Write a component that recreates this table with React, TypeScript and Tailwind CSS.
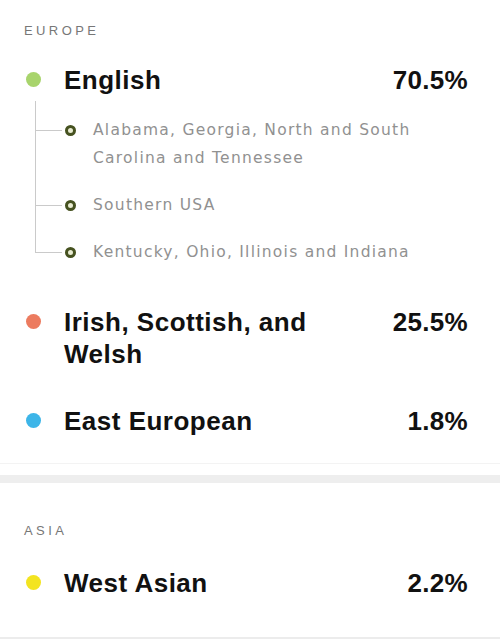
import React from "react";

type Sub = string;

function Row({
  color,
  name,
  pct,
  className = "",
}: {
  color: string;
  name: string;
  pct: string;
  className?: string;
}) {
  return (
    <div className={"flex items-start " + className}>
      <div className="w-[40px] shrink-0">
        <div
          className="ml-[2px] mt-[8px] h-[15px] w-[15px] rounded-full"
          style={{ backgroundColor: color }}
        />
      </div>
      <div className="w-[290px] text-[26px] font-bold leading-[32px] tracking-[0.5px] text-[#111]">
        {name}
      </div>
      <div className="ml-auto shrink-0 text-[26px] font-bold leading-[32px] tracking-[0.3px] text-[#111]">
        {pct}
      </div>
    </div>
  );
}

function SubList({ items }: { items: Sub[] }) {
  return (
    <div className="relative ml-[11px] mt-[20px] flex flex-col gap-[19px] pl-[58px]">
      <div className="absolute left-0 top-[-15px] bottom-[14px] w-px bg-[#cacaca]" />
      {items.map((t) => (
        <div key={t} className="relative">
          <div className="absolute left-[-58px] top-[14px] h-px w-[27px] bg-[#cacaca]" />
          <div className="absolute left-[-28px] top-[9px] h-[11px] w-[11px] rounded-full border-[3px] border-[#465220] bg-[#e9ecd2]" />
          <div className="font-['DejaVu_Sans',sans-serif] text-[15.5px] leading-[28px] tracking-[1.25px] text-[#919191]">
            {t}
          </div>
        </div>
      ))}
    </div>
  );
}

function Label({ children }: { children: React.ReactNode }) {
  return (
    <div className="text-[13px] leading-[16px] tracking-[3.4px] text-[#777]">
      {children}
    </div>
  );
}

export default function App() {
  return (
    <div className="h-[639px] w-[500px] overflow-hidden bg-white font-['Liberation_Sans',Arial,sans-serif]">
      <section className="pl-[24px] pr-[32px] pt-[23px]">
        <Label>EUROPE</Label>
        <Row className="mt-[25px]" color="#a8d46c" name="English" pct="70.5%" />
        <SubList
          items={[
            "Alabama, Georgia, North and South Carolina and Tennessee",
            "Southern USA",
            "Kentucky, Ohio, Illinois and Indiana",
          ]}
        />
        <Row
          className="mt-[40px]"
          color="#ec7b5f"
          name="Irish, Scottish, and Welsh"
          pct="25.5%"
        />
        <Row className="mt-[35px]" color="#3db5e8" name="East European" pct="1.8%" />
      </section>
      <div className="mt-[26px] h-px bg-[#f3f3f3]" />
      <div className="mt-[11px] h-[8px] bg-[#eeeeee]" />
      <section className="pl-[24px] pr-[32px] pt-[40px]">
        <Label>ASIA</Label>
        <Row className="mt-[28px]" color="#f3e420" name="West Asian" pct="2.2%" />
      </section>
      <div className="mt-[38px] h-[2px] bg-[#ececec]" />
    </div>
  );
}
